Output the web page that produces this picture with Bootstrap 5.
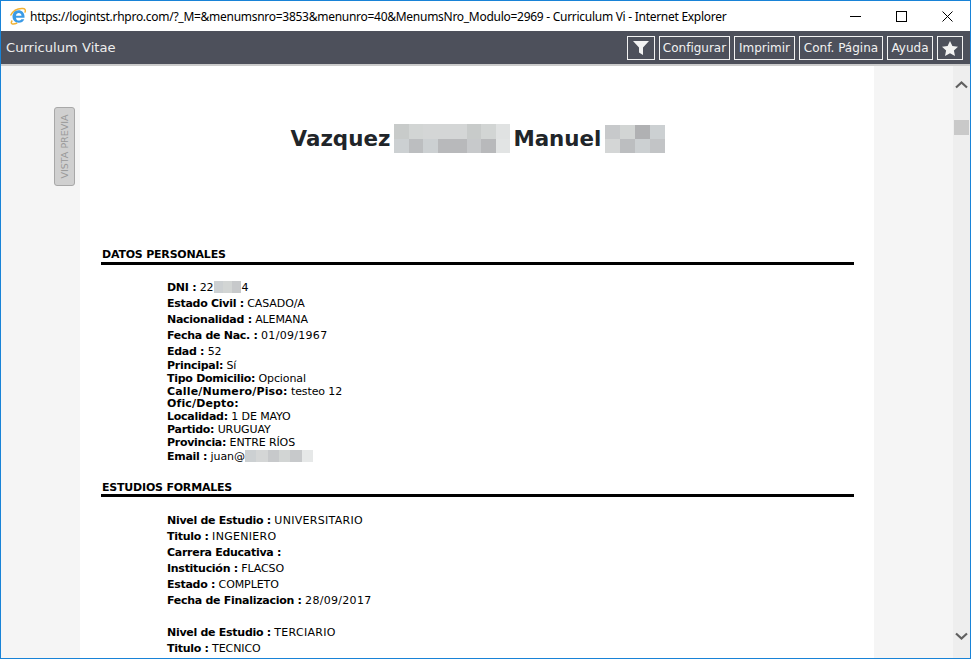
<!DOCTYPE html>
<html lang="es">
<head>
<meta charset="utf-8">
<title>Curriculum Vitae</title>
<link href="https://cdn.jsdelivr.net/npm/bootstrap@5.3.0/dist/css/bootstrap.min.css" rel="stylesheet">
<style>
html,body{height:659px;overflow:hidden;background:#fff}
.win{height:659px;border:1px solid #1883d7}
.titlebar{height:30px;background:#fff;font:12px "Noto Sans","Open Sans",sans-serif;color:#000;padding-left:8px;flex:none}
.titlebar .ttl{margin-left:3px;white-space:nowrap;font-size:12px;letter-spacing:-.277px}
.ctrl{width:46px;height:30px;display:flex;align-items:center;justify-content:center}
.ctrls{margin-left:auto}
.appbar{height:33px;background:#4d505b;flex:none;padding:5px 7px 4px 5px}
.appname{font:13.1px/22px "DejaVu Sans",sans-serif;color:#eee}
.tbtn{height:24px;border:1px solid #f2f2f2;border-radius:0;background:transparent;color:#f2f2f2;font:12px/22px "DejaVu Sans",sans-serif;padding:0;display:flex;align-items:center;justify-content:center}
.tbtn:hover{color:#fff;border-color:#fff}
.w-funnel{width:28px}.w-conf{width:71px}.w-impr{width:61px}.w-pag{width:84px}.w-ayu{width:46px}.w-star{width:26px}
.sepbar{height:2px;background:#ccc;flex:none}
.gutter{width:79px;background:#f5f5f5;flex:none;position:relative}
.sheet{width:794px;background:#fff;flex:none;padding-left:21px;overflow:hidden;color:#000;font:11px "DejaVu Sans",sans-serif}
.vscroll{width:17px;flex:none;background:#eee;position:relative}
.arrow{position:absolute;left:1px}
.arrow-up{top:14px}.arrow-down{bottom:17px}
.thumb{position:absolute;left:1px;top:54px;width:15px;height:15px;background:#c9c9c9}
.tab-preview{position:absolute;left:53px;top:41px;width:21px;height:79px;background:#d0d0d0;border:1px solid #a8a8a8;border-radius:3px;color:#999;font:9.5px "DejaVu Sans",sans-serif;display:flex;align-items:center;justify-content:center}
.tab-preview span{transform:rotate(-90deg);white-space:nowrap}
.nametitle{height:29px;margin:58px 0 95px;font:bold 21.4px/29px "DejaVu Sans",sans-serif;color:#212529;width:754px;white-space:nowrap;justify-content:center}
.pix{display:inline-grid;flex:none}
.pix i{display:block}
.px-a{grid-template-columns:repeat(8,14.5px);grid-auto-rows:14.5px;margin:0 3px 0 4px}
.px-b{grid-template-columns:repeat(4,15px);grid-auto-rows:14px;margin-left:4px}
.px-c{grid-template-columns:repeat(3,9px);grid-auto-rows:12px;vertical-align:-2px;margin-left:1px}
.px-d{grid-template-columns:repeat(6,11.4px);grid-auto-rows:12px;vertical-align:-2px}
.c0{background:#c8cbca}.c1{background:#d2d5d4}.c2{background:#d4d6d6}.c3{background:#e0e2e2}.c4{background:#ccd0d2}.c5{background:#bcbec0}.c6{background:#b8b9bb}.c7{background:#c7c9cb}.c8{background:#e2e4e4}.c9{background:#b0b1b3}.c10{background:#c2c4c6}.c11{background:#e6e8e8}
.sect{width:753px;height:14px;font:bold 11px/14px "DejaVu Sans",sans-serif;padding-left:1px;letter-spacing:-.2px}
.sect-tight{height:12px;line-height:12px}
.rule{width:753px;height:3px;background:#000;margin:0 0 15px}
.rule-loose{margin-bottom:16px}
.fields{padding-left:66px}
.line{white-space:nowrap;font-size:11px;letter-spacing:-.1px}
.line b{letter-spacing:-.28px}
.line b.bwide{letter-spacing:.15px}
.vwide{letter-spacing:.3px}
.h16{height:16px;line-height:16px}
.h15{height:15px;line-height:16px}
.h13{height:13px;line-height:13px}
.h12{height:12px;line-height:13px}
.gap-sect{height:17px}
.gap-group{height:16px}
</style>
</head>
<body class="m-0">
<div class="win d-flex flex-column overflow-hidden">
  <div class="titlebar d-flex align-items-center">
    <svg width="18" height="18" viewBox="0 0 18 18"><path d="M3.200 13.500c-2.500 3.500.5 4.500 5 2.500" fill="none" stroke="#f2b233" stroke-width="1.500"/><path d="M1.500 8.500C4 4 9 1.200 14 1.600c2.500.2 3 2 1.700 4" fill="none" stroke="#f2b233" stroke-width="1.500"/><path d="M9.500 3.200c3.500 0 6 2.700 6 6.300v1.200H7c.1 1.900 1.300 2.900 2.800 2.900 1.200 0 2.100-.5 2.600-1.400h2.900c-.9 2.400-3 3.600-5.600 3.600-3.600 0-6.200-2.600-6.200-6.200s2.700-6.400 6-6.400zM7 8.700h5.500c-.1-1.500-1.200-2.600-2.700-2.600S7.100 7.200 7 8.700z" fill="#3a9ae6"/></svg>
    <span class="ttl">https://logintst.rhpro.com/?_M=&amp;menumsnro=3853&amp;menunro=40&amp;MenumsNro_Modulo=2969 - Curriculum Vi - Internet Explorer</span>
    <div class="ctrls d-flex">
      <div class="ctrl"><svg width="11" height="11" viewBox="0 0 11 11"><path d="M0 5.500h11" stroke="#000"/></svg></div>
      <div class="ctrl"><svg width="11" height="11" viewBox="0 0 11 11"><rect x=".5" y=".5" width="10" height="10" fill="none" stroke="#000"/></svg></div>
      <div class="ctrl"><svg width="11" height="11" viewBox="0 0 11 11"><path d="M.5.500l10 10M10.500.500l-10 10" stroke="#000" fill="none"/></svg></div>
    </div>
  </div>
  <nav class="appbar d-flex align-items-center justify-content-between">
    <span class="appname">Curriculum Vitae</span>
    <div class="d-flex gap-1">
      <button type="button" class="btn tbtn w-funnel" aria-label="Filtro"><svg width="16" height="14" viewBox="0 0 16 14"><path d="M0 0h16L10 6.500V14L6 11.500V6.500z" fill="#f2f2f2"/></svg></button>
      <button type="button" class="btn tbtn w-conf">Configurar</button>
      <button type="button" class="btn tbtn w-impr">Imprimir</button>
      <button type="button" class="btn tbtn w-pag">Conf. Página</button>
      <button type="button" class="btn tbtn w-ayu">Ayuda</button>
      <button type="button" class="btn tbtn w-star" aria-label="Favorito"><svg width="16" height="15" viewBox="0 0 16 15"><path d="M8 0l2.400 5 5.600.7-4.100 3.800 1.100 5.500L8 12.300 3 15l1.100-5.500L0 5.700 5.600 5z" fill="#f2f2f2"/></svg></button>
    </div>
  </nav>
  <div class="sepbar"></div>
  <div class="d-flex flex-grow-1 overflow-hidden">
    <div class="gutter"><div class="tab-preview"><span>VISTA PREVIA</span></div></div>
    <main class="sheet">
      <h1 class="nametitle d-flex align-items-center">Vazquez<span class="pix px-a"><i class="c0"></i><i class="c1"></i><i class="c2"></i><i class="c2"></i><i class="c2"></i><i class="c0"></i><i class="c1"></i><i class="c3"></i><i class="c4"></i><i class="c5"></i><i class="c4"></i><i class="c6"></i><i class="c6"></i><i class="c7"></i><i class="c6"></i><i class="c8"></i></span>Manuel<span class="pix px-b"><i class="c7"></i><i class="c1"></i><i class="c9"></i><i class="c4"></i><i class="c2"></i><i class="c5"></i><i class="c4"></i><i class="c10"></i></span></h1>

      <div class="sect">DATOS PERSONALES</div>
      <div class="rule"></div>
      <div class="fields">
        <div class="line h16"><b>DNI :</b> 22<span class="pix px-c"><i class="c4"></i><i class="c1"></i><i class="c7"></i></span>4</div>
        <div class="line h16"><b>Estado Civil :</b> CASADO/A</div>
        <div class="line h16"><b>Nacionalidad :</b> ALEMANA</div>
        <div class="line h16"><b>Fecha de Nac. :</b> <span class="vwide">01/09/1967</span></div>
        <div class="line h15"><b>Edad :</b> 52</div>
        <div class="line h13"><b>Principal:</b> Sí</div>
        <div class="line h13"><b>Tipo Domicilio:</b> Opcional</div>
        <div class="line h12"><b class="bwide">Calle/Numero/Piso:</b> testeo 12</div>
        <div class="line h13"><b class="bwide">Ofic/Depto:</b></div>
        <div class="line h13"><b>Localidad:</b> 1 DE MAYO</div>
        <div class="line h13"><b>Partido:</b> URUGUAY</div>
        <div class="line h13"><b>Provincia:</b> ENTRE RÍOS</div>
        <div class="line h16"><b>Email :</b> juan@<span class="pix px-d"><i class="c4"></i><i class="c2"></i><i class="c7"></i><i class="c1"></i><i class="c7"></i><i class="c11"></i></span></div>
      </div>
      <div class="gap-sect"></div>
      <div class="sect sect-tight">ESTUDIOS FORMALES</div>
      <div class="rule rule-loose"></div>
      <div class="fields">
        <div class="line h16"><b>Nivel de Estudio :</b> <span class="vwide">UNIVERSITARIO</span></div>
        <div class="line h16"><b>Titulo :</b> <span class="vwide">INGENIERO</span></div>
        <div class="line h16"><b>Carrera Educativa :</b></div>
        <div class="line h16"><b>Institución :</b> FLACSO</div>
        <div class="line h16"><b>Estado :</b> COMPLETO</div>
        <div class="line h16"><b>Fecha de Finalizacion :</b> <span class="vwide">28/09/2017</span></div>
        <div class="gap-group"></div>
        <div class="line h16"><b>Nivel de Estudio :</b> <span class="vwide">TERCIARIO</span></div>
        <div class="line h16"><b>Titulo :</b> TECNICO</div>
      </div>
    </main>
    <div class="gutter"></div>
    <div class="vscroll">
      <svg class="arrow arrow-up" width="15" height="9" viewBox="0 0 15 9"><path d="M2 7.500l5.500-5 5.500 5" fill="none" stroke="#606060" stroke-width="2.200"/></svg>
      <div class="thumb"></div>
      <svg class="arrow arrow-down" width="15" height="9" viewBox="0 0 15 9"><path d="M2 1.500l5.500 5 5.500-5" fill="none" stroke="#606060" stroke-width="2.200"/></svg>
    </div>
  </div>
</div>
<script src="https://cdn.jsdelivr.net/npm/bootstrap@5.3.0/dist/js/bootstrap.bundle.min.js"></script>
</body>
</html>
